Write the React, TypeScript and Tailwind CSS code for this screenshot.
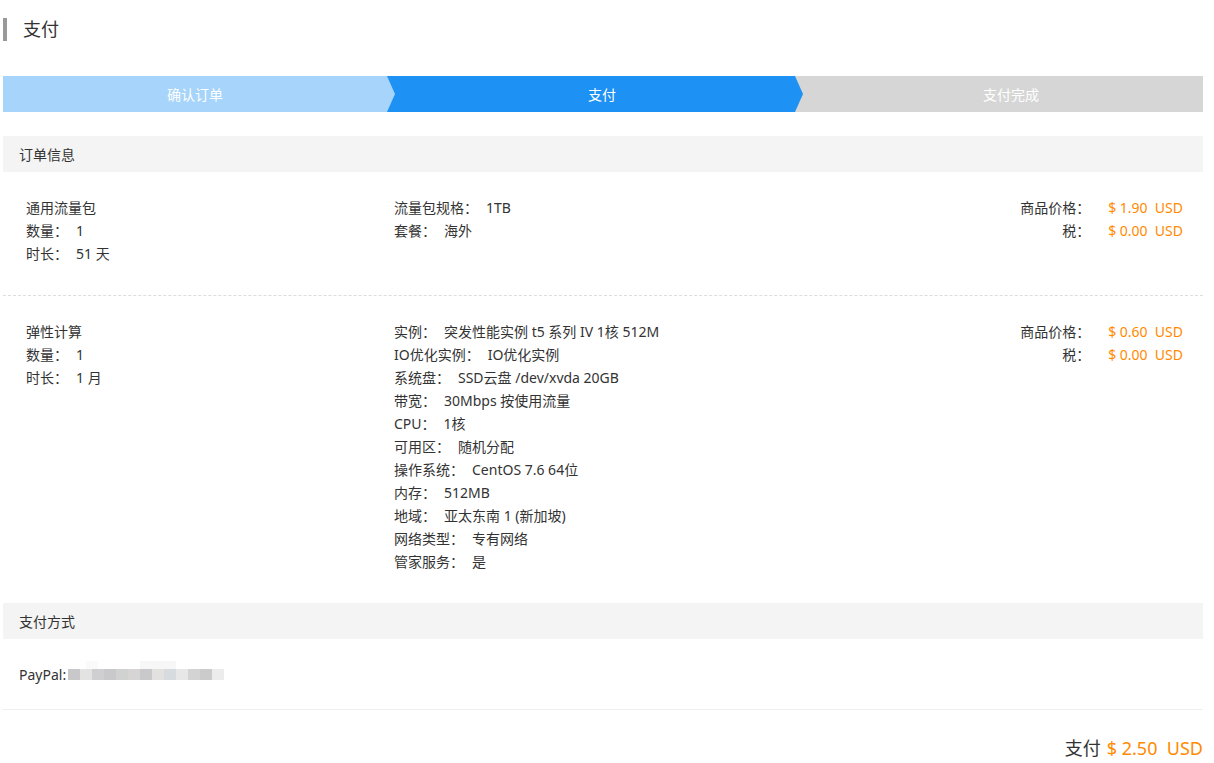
const font = { fontFamily: '"Noto Sans", "Noto Sans CJK SC", sans-serif' };

type Item = {
  name: string;
  meta: [string, string][];
  specs: [string, string][];
  price: string;
  tax: string;
};

const items: Item[] = [
  {
    name: "通用流量包",
    meta: [
      ["数量：", "1"],
      ["时长：", "51 天"],
    ],
    specs: [
      ["流量包规格：", "1TB"],
      ["套餐：", "海外"],
    ],
    price: "$ 1.90",
    tax: "$ 0.00",
  },
  {
    name: "弹性计算",
    meta: [
      ["数量：", "1"],
      ["时长：", "1 月"],
    ],
    specs: [
      ["实例：", "突发性能实例 t5 系列 IV 1核 512M"],
      ["IO优化实例：", "IO优化实例"],
      ["系统盘：", "SSD云盘 /dev/xvda 20GB"],
      ["带宽：", "30Mbps 按使用流量"],
      ["CPU：", "1核"],
      ["可用区：", "随机分配"],
      ["操作系统：", "CentOS 7.6 64位"],
      ["内存：", "512MB"],
      ["地域：", "亚太东南 1 (新加坡)"],
      ["网络类型：", "专有网络"],
      ["管家服务：", "是"],
    ],
    price: "$ 0.60",
    tax: "$ 0.00",
  },
];

const blur = [
  "#c8c7ca", "#e3e3e3", "#cfcfd1", "#c9c9cb", "#d0d2d2", "#d6d4d4", "#c9c8ca",
  "#e3e1df", "#d6dbe0", "#e7e7e7", "#d4d3d3", "#cbcbcb", "#ececec",
];

function Steps() {
  return (
    <div className="flex h-9 text-[14px] text-white">
      <div className="relative flex w-[384px] items-center justify-center bg-[#a6d4fa]">
        确认订单
        <span className="absolute left-full top-0 z-10 h-9 w-2 bg-[#a6d4fa] [clip-path:polygon(0_0,100%_50%,0_100%)]" />
      </div>
      <div className="relative flex w-[408px] items-center justify-center bg-[#1e91f5] pl-[22px]">
        支付
        <span className="absolute left-full top-0 z-10 h-9 w-2 bg-[#1e91f5] [clip-path:polygon(0_0,100%_50%,0_100%)]" />
      </div>
      <div className="flex flex-1 items-center justify-center bg-[#d6d6d6] pl-[24px]">
        支付完成
      </div>
    </div>
  );
}

function OrderItem({ item, last }: { item: Item; last: boolean }) {
  return (
    <div
      className={`flex pl-[23px] pr-[20px] pt-6 pb-[30px] text-[14px] leading-[23px] text-[#333] ${
        last ? "" : "border-b border-dashed border-[#ddd]"
      }`}
    >
      <div className="w-[368px]">
        <div>{item.name}</div>
        {item.meta.map(([k, v]) => (
          <div key={k}>
            {k}
            <span className="ml-[8px]">{v}</span>
          </div>
        ))}
      </div>
      <div className="flex-1">
        {item.specs.map(([k, v]) => (
          <div key={k}>
            {k}
            <span className="ml-[8px]">{v}</span>
          </div>
        ))}
      </div>
      <div className="grid grid-cols-[auto_auto] content-start gap-x-[18px]">
        <span className="text-right">商品价格：</span>
        <span className="whitespace-pre text-[#ff8a00]">{item.price}  USD</span>
        <span className="text-right">税：</span>
        <span className="whitespace-pre text-[#ff8a00]">{item.tax}  USD</span>
      </div>
    </div>
  );
}

export default function App() {
  return (
    <div className="min-h-[763px] bg-white" style={font}>
      <div className="ml-[3px] w-[1200px] pt-[18px]">
        <div className="flex h-[23px] items-center border-l-[4px] border-[#999] pl-4 text-[18px] text-[#333]">
          支付
        </div>

        <div className="mt-[35px]">
          <Steps />
        </div>

        <div className="mt-6 flex h-9 items-center bg-[#f4f4f4] px-4 text-[14px] text-[#333]">
          订单信息
        </div>
        {items.map((it, i) => (
          <OrderItem key={it.name} item={it} last={i === items.length - 1} />
        ))}

        <div className="flex h-9 items-center bg-[#f4f4f4] px-4 text-[14px] text-[#333]">
          支付方式
        </div>
        <div className="flex h-[71px] items-center border-b border-[#eee] px-4 text-[14px] text-[#333]">
          PayPal:
          <span className="relative ml-[2px] flex">
            {blur.map((c, i) => (
              <span key={i} className="h-[11px] w-3" style={{ backgroundColor: c }} />
            ))}
            <span className="absolute -top-2 left-[72px] h-2 w-[36px] bg-[#f7f7f7]" />
            <span className="absolute -top-2 left-[18px] h-2 w-[12px] bg-[#fafafa]" />
          </span>
        </div>

        <div className="flex justify-end pt-[25px] text-[18px] text-[#333]">
          支付
          <span className="ml-[6px] whitespace-pre text-[#ff8a00]">$ 2.50  USD</span>
        </div>
      </div>
    </div>
  );
}
